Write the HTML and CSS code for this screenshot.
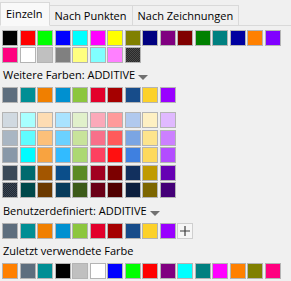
FILE: index.html
```html
<!DOCTYPE html>
<html lang="de">
<head>
  <meta charset="UTF-8">
  <title>Farbauswahl</title>
  <link rel="stylesheet" href="styles.css">
</head>
<body>
<div class="picker">
  <div class="tabs">
    <div class="tab active">Einzeln</div>
    <div class="tab">Nach Punkten</div>
    <div class="tab">Nach Zeichnungen</div>
  </div>

  <div class="page">
    <!-- Standardfarben -->
    <div class="swatches base">
      <span class="sw" style="background:#000000"></span>
      <span class="sw" style="background:#ff0000"></span>
      <span class="sw" style="background:#00ff00"></span>
      <span class="sw" style="background:#0000ff"></span>
      <span class="sw" style="background:#00ffff"></span>
      <span class="sw" style="background:#ff00ff"></span>
      <span class="sw" style="background:#ffff00"></span>
      <span class="sw" style="background:#808000"></span>
      <span class="sw" style="background:#000080"></span>
      <span class="sw" style="background:#800080"></span>
      <span class="sw" style="background:#800000"></span>
      <span class="sw" style="background:#008000"></span>
      <span class="sw" style="background:#008080"></span>
      <span class="sw" style="background:#0000a0"></span>
      <span class="sw" style="background:#ff8000"></span>
      <span class="sw" style="background:#8000ff"></span>
      <span class="sw" style="background:#ff0080"></span>
      <span class="sw" style="background:#ffffff"></span>
      <span class="sw" style="background:#c0c0c0"></span>
      <span class="sw" style="background:#808080"></span>
      <span class="sw" style="background:#ffff80"></span>
      <span class="sw" style="background:#80ffff"></span>
      <span class="sw" style="background:#ff80ff"></span>
      <span class="sw dither dark"></span>
    </div>

    <div class="label">Weitere Farben: ADDITIVE<span class="drop"></span></div>
    <div class="swatches ten">
      <span class="sw" style="background:#5d6e7e"></span>
      <span class="sw" style="background:#008e94"></span>
      <span class="sw" style="background:#f07f00"></span>
      <span class="sw" style="background:#0090d0"></span>
      <span class="sw" style="background:#8cc63e"></span>
      <span class="sw" style="background:#e2002b"></span>
      <span class="sw" style="background:#a50000"></span>
      <span class="sw" style="background:#174c8a"></span>
      <span class="sw" style="background:#fcd12a"></span>
      <span class="sw" style="background:#9900ff"></span>
    </div>

    <!-- Abstufungen -->
    <div class="swatches ten shades">
      <span class="sw" style="background:#d0d9e1"></span>
      <span class="sw" style="background:#a8ffff"></span>
      <span class="sw" style="background:#fddcb3"></span>
      <span class="sw" style="background:#a9e3ff"></span>
      <span class="sw" style="background:#e1f0cb"></span>
      <span class="sw" style="background:#fba9b9"></span>
      <span class="sw" style="background:#ff9b9b"></span>
      <span class="sw" style="background:#b1c9ee"></span>
      <span class="sw" style="background:#fef0c3"></span>
      <span class="sw" style="background:#e0b9ff"></span>

      <span class="sw" style="background:#a9b6c3"></span>
      <span class="sw" style="background:#5ffcff"></span>
      <span class="sw" style="background:#fcc07a"></span>
      <span class="sw" style="background:#6bd1ff"></span>
      <span class="sw" style="background:#c8e39b"></span>
      <span class="sw" style="background:#f8708a"></span>
      <span class="sw" style="background:#ff5b5b"></span>
      <span class="sw" style="background:#7ba5e3"></span>
      <span class="sw" style="background:#fde48c"></span>
      <span class="sw" style="background:#cc80ff"></span>

      <span class="sw" style="background:#8898a8"></span>
      <span class="sw" style="background:#00fcff"></span>
      <span class="sw" style="background:#f8a340"></span>
      <span class="sw" style="background:#32bbff"></span>
      <span class="sw" style="background:#acd872"></span>
      <span class="sw" style="background:#fd4160"></span>
      <span class="sw dither red"></span>
      <span class="sw" style="background:#3f80e0"></span>
      <span class="sw" style="background:#fdd95c"></span>
      <span class="sw" style="background:#b34dff"></span>

      <span class="sw" style="background:#3b4a58"></span>
      <span class="sw" style="background:#006a6e"></span>
      <span class="sw" style="background:#a35600"></span>
      <span class="sw" style="background:#0b4e8a"></span>
      <span class="sw" style="background:#5b8a24"></span>
      <span class="sw" style="background:#a10020"></span>
      <span class="sw" style="background:#7c0000"></span>
      <span class="sw" style="background:#12305e"></span>
      <span class="sw" style="background:#c09a00"></span>
      <span class="sw" style="background:#6600b3"></span>

      <span class="sw dither slate"></span>
      <span class="sw" style="background:#00484a"></span>
      <span class="sw" style="background:#6b3900"></span>
      <span class="sw" style="background:#073b5b"></span>
      <span class="sw" style="background:#3c5a18"></span>
      <span class="sw" style="background:#6a0016"></span>
      <span class="sw" style="background:#500000"></span>
      <span class="sw" style="background:#0c1f3e"></span>
      <span class="sw" style="background:#7c6500"></span>
      <span class="sw" style="background:#440077"></span>
    </div>

    <div class="label">Benutzerdefiniert: ADDITIVE<span class="drop"></span></div>
    <div class="swatches custom">
      <span class="sw" style="background:#5d6e7e"></span>
      <span class="sw" style="background:#008e94"></span>
      <span class="sw" style="background:#f07f00"></span>
      <span class="sw" style="background:#0090d0"></span>
      <span class="sw" style="background:#8cc63e"></span>
      <span class="sw" style="background:#e2002b"></span>
      <span class="sw" style="background:#a50000"></span>
      <span class="sw" style="background:#174c8a"></span>
      <span class="sw" style="background:#fcd12a"></span>
      <span class="sw" style="background:#9900ff"></span>
      <span class="add">
        <svg width="12" height="12" viewBox="0 0 12 12"><path d="M6 1v10M1 6h10" stroke="#3c3c3c" stroke-width="1.2" fill="none"/></svg>
      </span>
    </div>

    <div class="label">Zuletzt verwendete Farbe</div>
    <div class="swatches base">
      <span class="sw" style="background:#ff8000"></span>
      <span class="sw" style="background:#5d6e7e"></span>
      <span class="sw" style="background:#008e94"></span>
      <span class="sw" style="background:#000000"></span>
      <span class="sw" style="background:#c0c0c0"></span>
      <span class="sw" style="background:#ffffff"></span>
      <span class="sw" style="background:#0000ff"></span>
      <span class="sw" style="background:#00ff00"></span>
      <span class="sw" style="background:#ff0000"></span>
      <span class="sw" style="background:#800080"></span>
      <span class="sw" style="background:#00ffff"></span>
      <span class="sw" style="background:#008080"></span>
      <span class="sw" style="background:#ff00ff"></span>
      <span class="sw" style="background:#ff8000"></span>
      <span class="sw" style="background:#808000"></span>
      <span class="sw" style="background:#ff0080"></span>
    </div>
  </div>
</div>
</body>
</html>
```

FILE: styles.css
```css
* {
  margin: 0;
  padding: 0;
  box-sizing: border-box;
}

body {
  background: #f0f0f0;
  font-family: "Open Sans", "Noto Sans", sans-serif;
  font-size: 11px;
  color: #000;
}

.picker {
  width: 291px;
  height: 281px;
}

.tabs {
  display: flex;
  align-items: flex-end;
  height: 26px;
  padding-left: 2px;
  border-bottom: 1px solid #d9d9d9;
}

.tab {
  height: 21px;
  line-height: 19px;
  padding: 0 5px;
  margin-bottom: -1px;
  background: #f0f0f0;
  border: 1px solid #d9d9d9;
  border-left: 0;
  white-space: nowrap;
}

.tab.active {
  height: 24px;
  line-height: 21px;
  margin-left: -2px;
  padding: 0 6px 0 5px;
  background: #f9f9f9;
  border-left: 1px solid #d9d9d9;
  border-bottom-color: #f9f9f9;
}

.page {
  padding: 4px 0 0 2px;
}

.swatches {
  display: grid;
  grid-template-columns: repeat(16, 16px);
  column-gap: 1.5px;
  row-gap: 1px;
}

.swatches.ten {
  grid-template-columns: repeat(10, 16px);
}

.swatches.shades {
  margin: 9px 0 1px;
  row-gap: 1.5px;
}

.swatches.custom {
  grid-template-columns: repeat(11, 16px);
}

.sw {
  display: block;
  width: 16px;
  height: 16px;
  border: 1px solid #b4b4b4;
}

.dither {
  background-size: 2px 2px;
}

.dither.dark {
  background-color: #3a3a3a;
  background-image: repeating-conic-gradient(#2a2a2a 0 25%, #4a4a4a 0 50%);
}

.dither.slate {
  background-color: #2c3642;
  background-image: repeating-conic-gradient(#222a34 0 25%, #3a4654 0 50%);
}

.dither.red {
  background-color: #ff1010;
  background-image: radial-gradient(circle, #ff6060 0.5px, transparent 0.6px);
  background-size: 4px 4px;
}

.label {
  display: flex;
  align-items: center;
  height: 24px;
  padding-left: 1px;
  line-height: 16px;
}

.drop {
  width: 0;
  height: 0;
  margin: 4px 0 0 3px;
  border-left: 5px solid transparent;
  border-right: 5px solid transparent;
  border-top: 5px solid #707070;
}

.add {
  display: flex;
  align-items: center;
  justify-content: center;
  width: 16px;
  height: 16px;
  background: #f6f6f6;
  border: 1px solid #cfcfcf;
}
```
